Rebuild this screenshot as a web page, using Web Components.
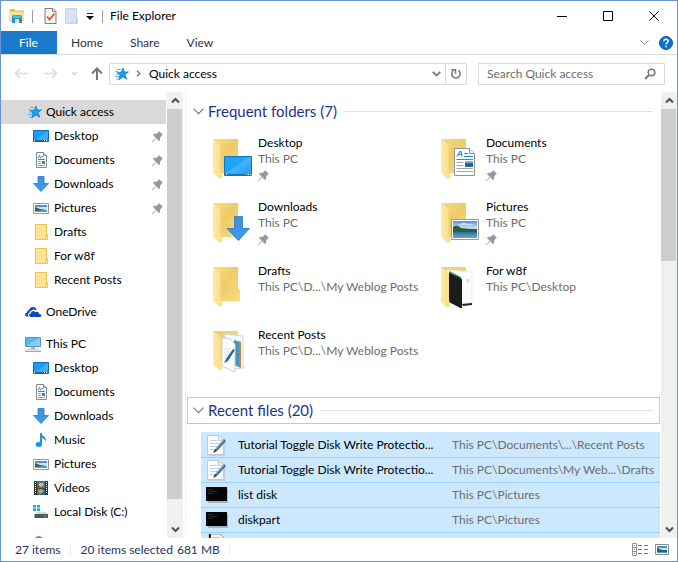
<!DOCTYPE html>
<html lang="en">
<head>
<meta charset="utf-8">
<title>File Explorer</title>
<style>
  html, body { height: 100%; margin: 0; }
  body { font: 12px/16px Lato, "Open Sans", sans-serif; color: #000; background: #fff; }
</style>
</head>
<body>
<explorer-window></explorer-window>

<script>
/* ---------- icons ---------- */
const docLines = '<path d="M1.500.5h7l3 3v12h-10z" fill="#fff" stroke="#8b8b8b"/><path d="M8.500.5v3h3" fill="#e8e8e8" stroke="#8b8b8b"/>';
const folderDefs = `<defs>
  <linearGradient id="fb" x1="0" x2="1" y2="1" y1="0"><stop offset="0" stop-color="#f7dd8c"/><stop offset=".45" stop-color="#eecb66"/><stop offset="1" stop-color="#f9dd80"/></linearGradient>
  <linearGradient id="ff" x2="1" y2="0"><stop offset="0" stop-color="#ffe9a6"/><stop offset="1" stop-color="#fddd86"/></linearGradient>
  <linearGradient id="sky" x2="0" y2="1"><stop offset="0" stop-color="#4c8fe0"/><stop offset=".45" stop-color="#d5e9f9"/><stop offset=".5" stop-color="#356b55"/><stop offset=".65" stop-color="#33708f"/><stop offset="1" stop-color="#6aa5d6"/></linearGradient>
  <linearGradient id="scr" x2="1" y2="1"><stop offset="0" stop-color="#1aa0f8"/><stop offset=".45" stop-color="#27a4fb"/><stop offset=".5" stop-color="#43b2ff"/><stop offset="1" stop-color="#1b9bf5"/></linearGradient>
  <linearGradient id="dn" x2="0" y2="1"><stop offset="0" stop-color="#3f8fe0"/><stop offset="1" stop-color="#3b9bea"/></linearGradient></defs>`;
const folderFront = '<path d="M1 1l8 6v27l1 1v4l-2 2-7-6z" fill="url(#ff)"/><path d="M9 7v24" stroke="#f3cf72" fill="none"/>';
const folderBody = '<path d="M10 36l20-1-2-1z" fill="#e9e9e9"/><path d="M1 1h25v21l2 2v11H1z" fill="url(#fb)"/>';
const smallPicture = '<path d="M.5 2.500h15v10H.5z" fill="#fff" stroke="#9a9a9a"/><path d="M2 4h12v3H2z" fill="#4b93dc"/><path d="M2 6h12v2H2z" fill="#cbe3f4"/><path d="M2 6l5 2 7 1v2H2z" fill="#2f6659"/><path d="M2 10l12-1v2H2z" fill="#5d9dc6"/>';
const pad = '<path d="M2 2h12l5 4v16H2z" fill="#c3cdd5"/><path d="M1.500 1.500h11l5 5v14h-16z" fill="#fbfcfd" stroke="#c4cbd0"/><path d="M12.500 1.500v5h5" fill="#eceff1" stroke="#c4cbd0"/><path d="M4 6.500h7M4 9.500h10M4 12.500h8M4 15.500h5" stroke="#bcd3e4"/><path d="M8 18l2-4 8-9 2 2-8 9z" fill="#3d6f9c"/><path d="M10 15l8-9" stroke="#8ab3d2"/><path d="M7 19l2-4 2 2z" fill="#333"/>';

const ICONS = {
  app: [16, 16, '<path d="M.5 1h5l1 1.500H15v11H.5z" fill="#f3c950"/><path d="M1 4h14v8.500H1z" fill="#fde38f"/><path d="M2 1.800h3v1H2z" fill="#7cc66b"/><path d="M3 15V9q0-2 2-2h6q2 0 2 2v6h-3v-3q0-1-1-1H7q-1 0-1 1v3z" fill="#1c93dc"/><path d="M4 8.500q0-1 1-1h6q1 0 1 1L11 10H5z" fill="#56bdf2"/>'],
  check: [13, 16, '<path d="M1 .5h8l3 3v12H1z" fill="#f6f6f6" stroke="#7d7d7d"/><path d="M8.500.5v3h3" fill="#eee" stroke="#7d7d7d"/><path d="M3 8.500l2.500 3 5-6" fill="none" stroke="#e8501f" stroke-width="1.800"/>'],
  ghost: [13, 16, '<path d="M.5.5h11v9l1 1v5H.5z" fill="#d5e1f4" stroke="#c6d3e8"/><path d="M10.500 15v-5l2 .5v5z" fill="#c9d7ed"/>'],
  more: [8, 8, '<path d="M1 1.500h6" stroke="#222"/><path d="M0 4h8L4 8z" fill="#111"/>'],
  min: [10, 10, '<path d="M0 5.500h10" stroke="#000"/>'],
  max: [10, 10, '<path d="M.5.5h9v9h-9z" fill="none" stroke="#000"/>'],
  close: [10, 10, '<path d="M.5.5l9 9m0-9l-9 9" stroke="#000"/>'],
  expand: [9, 6, '<path d="M.5.5l4 4 4-4" fill="none" stroke="#8d8d8d"/>'],
  help: [14, 14, '<circle cx="7" cy="7" r="6.500" fill="#0f6fd0" stroke="#0a5bb5"/><path d="M4.900 5.200q.2-2 2.200-2t2.100 1.800q0 1-1.100 1.700-1 .6-1 1.500v.4M7.100 9.800v1.500" fill="none" stroke="#fff" stroke-width="1.500"/>'],
  back: [14, 11, '<path d="M13 5.500H1.500M6 1L1.500 5.500 6 10" fill="none" stroke="#d9d9d9" stroke-width="1.600"/>'],
  forward: [14, 11, '<path d="M1 5.500h11.500M8 1l4.500 4.500L8 10" fill="none" stroke="#d9d9d9" stroke-width="1.600"/>'],
  tiny: [7, 5, '<path d="M1 1l2.500 2.500L6 1" fill="none" stroke="#d0d0d0" stroke-width="1.300"/>'],
  up: [12, 13, '<path d="M6 13V1.500M1 6.500l5-5 5 5" fill="none" stroke="#777" stroke-width="2"/>'],
  crumb: [5, 7, '<path d="M1 .8l2.700 2.700L1 6.200" fill="none" stroke="#777" stroke-width="1.400"/>'],
  drop: [9, 6, '<path d="M.7.8l3.800 3.800L8.300.8" fill="none" stroke="#777" stroke-width="1.800"/>'],
  reload: [12, 12, '<path d="M8.300 2.300A4.200 4.200 0 1 1 3.300 2.500" fill="none" stroke="#777" stroke-width="1.500"/><path d="M1.500 1.800h4v4" fill="none" stroke="#777" stroke-width="1.500"/>'],
  search: [12, 12, '<circle cx="7.500" cy="4.500" r="3.300" fill="none" stroke="#777" stroke-width="1.600"/><path d="M5 7l-4 4" stroke="#777" stroke-width="2"/>'],
  star: [15, 14, '<path d="M9 1l1.300 4 4.200-.1-3.500 2.700 1.800 4.600-3.800-2.300-4.200 3 1.200-5-3-2.400 4.300-.3z" fill="#1d9cec" stroke="#1281ce" stroke-width=".8"/><path d="M3 2.500h4M1.500 4.500H4M2 7h3M1 9.500h4M2 12h2" stroke="#5bb5ee"/>'],
  desktop: [16, 12, '<defs><linearGradient id="d" x2="1" y2="1"><stop offset="0" stop-color="#149af5"/><stop offset=".5" stop-color="#1a9ff8"/><stop offset=".55" stop-color="#46b4ff"/><stop offset="1" stop-color="#27a3fb"/></linearGradient></defs><path d="M.5.5h15v11H.5z" fill="url(#d)" stroke="#0b6eb5"/><path d="M1 10.500h14" stroke="#0b68a8"/><path d="M1 10.500h1m9 0h1m1 0h1" stroke="#fff"/>'],
  document: [13, 16, docLines + '<path d="M3 6.500l1.500-3L6 6.500M6.500 4.500h2" fill="none" stroke="#2295dd"/><path d="M3 7.500h7" stroke="#2295dd"/><path d="M3 9.500h3M3 11.500h3M3 13.500h7" stroke="#999"/><path d="M7 9h3v3H7z" fill="#3c83b5"/>'],
  download: [16, 16, '<path d="M5 .5h6v7h4.500L8 15.500.5 7.500H5z" fill="#3d97e4" stroke="#2678c3" stroke-width=".8"/>'],
  picture: [16, 14, smallPicture],
  folder: [13, 16, '<path d="M.5.5h11v10l1 .5v4.500H.5z" fill="#ffe395" stroke="#e9c353"/><path d="M10.500 15v-4l2-.5v5z" fill="#fbe9b0" stroke="#e9c353"/>'],
  onedrive: [17, 10, '<path d="M1.500 9.500Q0 9 0 7.500 0 5.600 2 5.400 2 3.500 4 3q1-3 4-3 3 0 4 2.500l-2 .6Q8.500 1.800 6.800 3.500 4.500 3.800 4.400 6 3 6.200 3 8q0 1 .8 1.500z" fill="#0f4db0"/><path d="M6 10Q4 10 4 8.200 4 6.600 5.800 6.500 5.800 4 8.200 4q1.300 0 2 1 3.600-.9 4 2 2.300 0 2.300 1.600Q16.500 10 15 10z" fill="#0f4db0"/>'],
  pc: [16, 15, '<path d="M.5.5h15v9H.5z" fill="#51b5f2" stroke="#5d93b5"/><path d="M1 9l13-8h1v8z" fill="#86cdf8"/><path d="M6 10h4v2H6z" fill="#a9b8c2"/><path d="M2 12.500h12" stroke="#c5ced4"/><path d="M0 14.300h16" stroke="#7f97a8"/>'],
  music: [16, 16, '<path d="M8 1v11" stroke="#1c96ea" stroke-width="2"/><path d="M8 0q.5 3 3 4.500 2.500 1.500 1.500 5.500Q12 6.500 8 5.500z" fill="#1c96ea"/><ellipse cx="5.800" cy="12.500" rx="3.200" ry="2.500" fill="#1c96ea"/>'],
  video: [16, 16, '<path d="M1 1h14v14H1z" fill="#333"/><path d="M2.500 2v12M13.500 2v12" stroke="#fff" stroke-dasharray="1 1"/><path d="M4 1h8v7H4z" fill="#46769f"/><path d="M4 8.500h8V15H4z" fill="#2566b3"/><path d="M6 3h4l1 2-3 2-2-1z" fill="#e8bd35"/><path d="M5 10l3-1 3 2-2 2-3 1z" fill="#d4a52c"/><path d="M4 6h3v1H4zM9 13h3v1H9z" fill="#a34039"/>'],
  disk: [16, 14, '<path d="M0 0h3v2.500H0zM4 0h3v2.500H4zM0 3.300h3V6H0zM4 3.300h3V6H4z" fill="#13b3e8"/><path d="M4 7h9l2 2.500H1.500z" fill="#d9dbdd"/><path d="M1.500 9h13.500v4H1.500z" fill="#55585b"/><path d="M11 11h2" stroke="#4ee04a"/>'],
  network: [16, 16, '<circle cx="6" cy="5" r="5" fill="#a9cfe2"/><path d="M2 1.500L6 0l3 1.500-2 1H3z" fill="#5a9ab8"/>'],
  pin: [11, 11, '<path d="M7 0l4 4-1.300.5L8 7l.3 2L7 10 4.200 7.200.6 11 0 10.400 3.800 6.800 1 4l1-1.300L4 3l2.500-1.700z" fill="#8e9aa4"/>'],
  group: [11, 7, '<path d="M.5.7l5 5 5-5" fill="none" stroke="#777" stroke-width="1.200"/>'],
  arrowup: [9, 7, '<path d="M1 5.500L4.500 2 8 5.500" fill="none" stroke="#505050" stroke-width="2"/>'],
  arrowdown: [9, 7, '<path d="M1 1.500L4.500 5 8 1.500" fill="none" stroke="#505050" stroke-width="2"/>'],
  'f-plain': [40, 42, folderDefs + folderBody + folderFront],
  'f-desktop': [40, 42, folderDefs + folderBody + folderFront + '<path d="M12.500 18.500h27v19h-27z" fill="url(#scr)" stroke="#0f75bd"/><path d="M13 36.500h26" stroke="#0f75bd"/><path d="M14 36.500h1m19 0h1m1 0h1m1 0h1" stroke="#fff"/>'],
  'f-document': [40, 42, folderDefs + folderBody + folderFront + '<path d="M14.500 10.500h15l5 5v22h-20z" fill="#fff" stroke="#8f9498"/><path d="M29.500 10.500v5h5" fill="#ececec" stroke="#8f9498"/><path d="M17 18.500l3-5h1l1 5M18 16.500h4M24 15.500h4M24 18.500h9M16.500 21.500h16.500" fill="none" stroke="#1f90da" stroke-width="1.200"/><path d="M16.500 24.500h7M16.500 27.500h7M16.500 30.500h16.500M16.500 33.500h16.500" stroke="#a5a5a5"/><path d="M25 23h8v6h-8z" fill="#2d648f"/><path d="M25 23h8v2h-8z" fill="#6db0e8"/>'],
  'f-download': [40, 42, folderDefs + folderBody + folderFront + '<path d="M22.500 14.500h8v12h7L26.500 38.500l-11.500-12h7.500z" fill="url(#dn)" stroke="#2677c4" stroke-width=".8"/>'],
  'f-picture': [40, 42, folderDefs + folderBody + folderFront + '<path d="M11.500 17.500h27v20h-27z" fill="#fff" stroke="#9a9a9a"/><path d="M13 19h24v17H13z" fill="url(#sky)"/><path d="M13 25q4-3 8 1 7 1 16 1v3H13z" fill="#2c5d4b"/><path d="M20 22q4-2 8 0 4-1 6 1H18z" fill="#fff" opacity=".6"/>'],
  'f-dark': [40, 42, folderDefs + '<path d="M1 1h25v30H1z" fill="#f1d175"/><path d="M7 4l25 2v31l-22 1z" fill="#fcfcfc" stroke="#ececec"/><path d="M26 14h4m-4 2h3" stroke="#ccc"/><path d="M9 5l12 6v2l-12-5z" fill="#3d8a3a"/><path d="M9 7l13 6v30l-13-7z" fill="#1b1c1c"/><path d="M22 38l10-1v2l-9 1z" fill="#1c2733"/><path d="M1 1l8 6v26l1 7-2 2-7-6z" fill="url(#ff)"/>'],
  'f-posts': [40, 42, folderDefs + '<path d="M1 1h25v30H1z" fill="#f1d175"/><path d="M22 40l13-2-4-2z" fill="#e9e9e9"/><path d="M12 4l19 2v32l-9 1z" fill="#f9f9f9" stroke="#d5d5d5"/><path d="M22 10l7 2v26l-7-3z" fill="#4d95ae"/><path d="M27 12l2 1v24l-2-1z" fill="#b6894a"/><path d="M10 8l8 1 5 5v28l-13-6z" fill="#fff" stroke="#d0d0d0"/><path d="M12 19h7m-7 3h8m-8 3h6m-6 3h5" stroke="#d2dbe2"/><path d="M12 33l2-4 7-10 2 1-7 11z" fill="#28679a"/><path d="M1 1l8 6v26l1 5-1 3-8-6z" fill="url(#ff)"/>'],
  note: [22, 22, pad],
  console: [22, 16, '<path d="M2 2h20v14H2z" fill="#9fb3c5"/><path d="M0 0h21v14H0z" fill="#050505"/><path d="M1 2.500h7M2 4.500h9M2 6.500h6" stroke="#2a2a2a"/>'],
  sheet: [22, 22, '<path d="M3 0h11l4 4v18H3z" fill="#f3f5f6" stroke="#8e969c"/><path d="M4 0v21" stroke="#1b2c3a" stroke-width="2"/><path d="M7 4h7" stroke="#999"/>'],
  details: [16, 13, '<path d="M.5.5h4v12h-4zM.5 4.500h4M.5 8.500h4" fill="none" stroke="#909090"/><path d="M2 2.500h1" stroke="#3b9a4a"/><path d="M2 6.500h1" stroke="#2782d6"/><path d="M2 10.500h1" stroke="#e23b2c"/><path d="M6 2.500h4m2 0h4M6 6.500h4m2 0h4M6 10.500h4m2 0h4" stroke="#777"/>'],
  thumbs: [14, 11, '<path d="M.5.5h13v10H.5z" fill="#fff" stroke="#8a8a8a"/><path d="M2 2h10v7H2z" fill="#4d91d5"/><path d="M2 4h10v2H2z" fill="#c4def2"/><path d="M2 4l5 2h5v2H2z" fill="#2d6558"/>']
};

const BASE = `<style>
  :host { box-sizing: border-box; }
  *, *::before, *::after { box-sizing: border-box; }
  button { font: inherit; color: inherit; background: none; border: 0; padding: 0; margin: 0; display: flex; align-items: center; justify-content: center; }
  a { color: inherit; text-decoration: none; }
  input { font: inherit; }
</style>`;

function define(name, render) {
  customElements.define(name, class extends HTMLElement {
    connectedCallback() {
      if (this.shadowRoot) return;
      this.attachShadow({ mode: 'open' }).innerHTML = BASE + render(this);
    }
  });
}
const attr = (el, n, d = '') => el.getAttribute(n) ?? d;
const icon = n => `<ui-icon name="${n}"></ui-icon>`;

define('ui-icon', el => {
  const [w, h, body] = ICONS[attr(el, 'name')];
  return `<style>:host { display: inline-flex; flex: none; } svg { display: block; }</style>
  <svg width="${w}" height="${h}" viewBox="0 0 ${w} ${h}" aria-hidden="true">${body}</svg>`;
});

/* ---------- window chrome ---------- */
define('title-bar', () => `<style>
  :host { display: flex; align-items: center; height: 30px; padding-left: 8px; }
  .quick { display: flex; align-items: center; }
  .rule { width: 1px; height: 13px; background: #9b9b9b; margin: 0 11px 0 7px; }
  .tools { display: flex; align-items: center; gap: 8px; }
  .rule.end { margin: 0 7px 0 8px; }
  h1 { font: inherit; margin: 0; flex: 1; }
  .caption { display: flex; }
  .caption button { width: 46px; height: 30px; }
  </style>
  <div class="quick">${icon('app')}<span class="rule"></span>
    <div class="tools">
      <button aria-label="Properties">${icon('check')}</button>
      <button aria-label="New folder">${icon('ghost')}</button>
      <button aria-label="Customize toolbar">${icon('more')}</button>
    </div><span class="rule end"></span></div>
  <h1>File Explorer</h1>
  <div class="caption">
    <button aria-label="Minimize">${icon('min')}</button>
    <button aria-label="Maximize">${icon('max')}</button>
    <button aria-label="Close">${icon('close')}</button>
  </div>`);

define('ribbon-tabs', () => `<style>
  :host { display: flex; align-items: stretch; height: 24px; border-bottom: 1px solid #dadbdc; color: #333; }
  nav { display: flex; flex: 1; }
  nav button { padding: 0 14px 0 13px; }
  nav .file { width: 56px; background: #1979ca; color: #fff; margin-right: 1px; }
  .side { display: flex; gap: 10px; align-items: center; padding-right: 4px; }
  </style>
  <nav><button class="file">File</button><button>Home</button><button>Share</button><button>View</button></nav>
  <div class="side"><button aria-label="Expand ribbon">${icon('expand')}</button><button aria-label="Help">${icon('help')}</button></div>`);

define('address-bar', () => `<style>
  :host { display: flex; align-items: center; height: 37px; padding: 0 12px 0 13px; }
  .moves { display: flex; align-items: center; gap: 13px; }
  .moves .pair { display: flex; gap: 16px; }
  .box { display: flex; align-items: stretch; height: 22px; border: 1px solid #d9d9d9; min-width: 0; }
  .path { flex: 1; margin: 0 11px 0 6px; }
  .crumbs { display: flex; align-items: center; flex: 1; padding-left: 4px; }
  .crumbs ui-icon:nth-of-type(2) { margin: 0 8px 0 7px; }
  .drop { width: 18px; }
  .reload { width: 21px; border-left: 1px solid #d9d9d9; }
  .find { width: 187px; align-items: center; padding: 0 8px; }
  input { flex: 1; min-width: 0; border: 0; padding: 0; background: none; outline: 0; color: #6d6d6d; }
  input::placeholder { color: #6d6d6d; opacity: 1; }
  </style>
  <div class="moves">
    <div class="pair"><button aria-label="Back" disabled>${icon('back')}</button>
    <button aria-label="Forward" disabled>${icon('forward')}</button></div>
    <button aria-label="Recent locations" disabled>${icon('tiny')}</button>
    <button aria-label="Up">${icon('up')}</button>
  </div>
  <div class="box path">
    <div class="crumbs">${icon('star')}${icon('crumb')}<button>Quick access</button></div>
    <button class="drop" aria-label="Previous locations">${icon('drop')}</button>
    <button class="reload" aria-label="Refresh">${icon('reload')}</button>
  </div>
  <div class="box find"><input type="search" aria-label="Search Quick access" placeholder="Search Quick access">
    <button aria-label="Search">${icon('search')}</button></div>`);

define('scroll-track', el => `<style>
  :host { display: flex; flex-direction: column; width: 16px; background: #f0f0f0; }
  button { height: 17px; flex: none; }
  .thumb { flex: ${attr(el, 'thumb')} 1 0; background: #cdcdcd; margin-right: 1px; }
  .rest { flex: ${attr(el, 'rest')} 1 0; }
  </style>
  <button aria-label="Scroll up">${icon('arrowup')}</button>
  <div class="thumb"></div><div class="rest"></div>
  <button aria-label="Scroll down">${icon('arrowdown')}</button>`);

/* ---------- navigation pane ---------- */
define('nav-item', el => `<style>
  :host { display: block; }
  a { display: flex; align-items: center; height: 24px; padding-left: 32px; padding-right: 4px; }
  .glyph { width: 16px; display: flex; justify-content: center; margin-right: 5px; }
  .text { flex: 1; white-space: nowrap; }
  :host([root]) a { padding-left: 24px; }
  :host([gap]) { padding-top: 8px; }
  :host([selected]) a { background: #d9d9d9; margin-right: 1px; }
  :host([selected]) .glyph { padding-left: 3px; }
  </style>
  <a href="#"><span class="glyph">${icon(attr(el, 'icon'))}</span><span class="text"><slot></slot></span>${el.hasAttribute('pinned') ? icon('pin') : ''}</a>`);

define('nav-pane', () => `<style>
  :host { display: flex; width: 185px; flex: none; min-height: 0; }
  nav { flex: 1; padding-top: 8px; overflow: hidden; }
  .edge { width: 3px; border-right: 1px solid #f0f0f0; }
  </style>
  <nav aria-label="Folders">
    <nav-item root selected icon="star">Quick access</nav-item>
    <nav-item icon="desktop" pinned>Desktop</nav-item>
    <nav-item icon="document" pinned>Documents</nav-item>
    <nav-item icon="download" pinned>Downloads</nav-item>
    <nav-item icon="picture" pinned>Pictures</nav-item>
    <nav-item icon="folder">Drafts</nav-item>
    <nav-item icon="folder">For w8f</nav-item>
    <nav-item icon="folder">Recent Posts</nav-item>
    <nav-item root gap icon="onedrive">OneDrive</nav-item>
    <nav-item root gap icon="pc">This PC</nav-item>
    <nav-item icon="desktop">Desktop</nav-item>
    <nav-item icon="document">Documents</nav-item>
    <nav-item icon="download">Downloads</nav-item>
    <nav-item icon="music">Music</nav-item>
    <nav-item icon="picture">Pictures</nav-item>
    <nav-item icon="video">Videos</nav-item>
    <nav-item icon="disk">Local Disk (C:)</nav-item>
    <nav-item gap icon="network"></nav-item>
  </nav>
  <scroll-track thumb="390" rest="22"></scroll-track><span class="edge"></span>`);

/* ---------- content pane ---------- */
define('group-header', el => `<style>
  :host { display: flex; align-items: center; height: 27px; margin: 0 1px; padding: 0 6px 0 5px; border: 1px solid transparent; color: #1e3287; }
  :host([focused]) { border-color: #99d1ff; }
  h2 { font-size: 15px; line-height: 18px; font-weight: 400; margin: 0 8px 0 4px; padding-bottom: 2px; white-space: nowrap; }
  .line { flex: 1; height: 1px; background: #e2e2e2; }
  </style>
  <button aria-label="Collapse group">${icon('group')}</button><h2><slot></slot></h2><span class="line"></span>`);

define('folder-tile', el => `<style>
  :host { display: block; height: 64px; min-width: 0; }
  a { display: flex; gap: 6px; }
  ui-icon { flex: none; }
  .art { padding-top: 3px; }
  .text { display: flex; flex-direction: column; min-width: 0; white-space: nowrap; }
  .where { color: #6d6d6d; }
  .pin { padding-top: 2px; }
  </style>
  <a href="#"><span class="art">${icon(attr(el, 'icon'))}</span>
  <span class="text"><span><slot></slot></span><span class="where">${attr(el, 'where')}</span>
  ${el.hasAttribute('pinned') ? `<span class="pin">${icon('pin')}</span>` : ''}</span></a>`);

define('recent-files', () => {
  const rows = [
    ['note', 'Tutorial Toggle Disk Write Protectio...', 'This PC\\Documents\\...\\Recent Posts'],
    ['note', 'Tutorial Toggle Disk Write Protectio...', 'This PC\\Documents\\My Web...\\Drafts'],
    ['console', 'list disk', 'This PC\\Pictures'],
    ['console', 'diskpart', 'This PC\\Pictures'],
    ['sheet', '', '']
  ];
  return `<style>
  :host { display: block; margin: 8px 1px 0 15px; }
  table { width: 100%; border-collapse: separate; border-spacing: 0; table-layout: fixed; background: #cce8ff; border-top: 1px solid #cce8ff; }
  td { height: 25px; padding: 0; border-bottom: 1px solid #99d1ff; white-space: nowrap; overflow: hidden; }
  td:first-child { width: 37px; }
  td:last-child { width: 208px; color: #6d6d6d; }
  td ui-icon { display: flex; justify-content: center; padding-right: 5px; }
  </style>
  <table aria-label="Recent files"><tbody>${rows.map(r => `<tr><td>${icon(r[0])}</td><td>${r[1]}</td><td>${r[2]}</td></tr>`).join('')}</tbody></table>`;
});

define('content-pane', () => `<style>
  :host { display: flex; flex: 1; min-width: 0; min-height: 0; }
  main { flex: 1; min-width: 0; padding-top: 6px; overflow: hidden; }
  .tiles { display: grid; grid-template-columns: 228px 1fr; padding: 10px 0 6px 26px; }
  </style>
  <main>
    <group-header>Frequent folders (7)</group-header>
    <div class="tiles">
      <folder-tile icon="f-desktop" where="This PC" pinned>Desktop</folder-tile>
      <folder-tile icon="f-document" where="This PC" pinned>Documents</folder-tile>
      <folder-tile icon="f-download" where="This PC" pinned>Downloads</folder-tile>
      <folder-tile icon="f-picture" where="This PC" pinned>Pictures</folder-tile>
      <folder-tile icon="f-plain" where="This PC\\D...\\My Weblog Posts">Drafts</folder-tile>
      <folder-tile icon="f-dark" where="This PC\\Desktop">For w8f</folder-tile>
      <folder-tile icon="f-posts" where="This PC\\D...\\My Weblog Posts">Recent Posts</folder-tile>
    </div>
    <group-header focused>Recent files (20)</group-header>
    <recent-files></recent-files>
  </main>
  <scroll-track thumb="152" rest="260"></scroll-track>`);

define('status-bar', () => `<style>
  :host { display: flex; align-items: center; height: 23px; padding: 0 8px 0 14px; color: #1e3560; }
  span { white-space: nowrap; }
  .sep { width: 1px; height: 13px; background: #ececec; margin: 0 10px 0 9px; }
  .size { margin-left: 4px; }
  .views { margin-left: auto; display: flex; gap: 7px; }
  </style>
  <span>27 items</span><i class="sep"></i><span>20 items selected</span><span class="size">681 MB</span><i class="sep"></i>
  <div class="views"><button aria-label="Details view">${icon('details')}</button><button aria-label="Large icons view">${icon('thumbs')}</button></div>`);

define('explorer-window', () => `<style>
  :host { display: flex; flex-direction: column; height: 100vh; border: 1px solid #6a93cf; background: #fff; overflow: hidden; }
  .body { display: flex; flex: 1; min-height: 0; }
  title-bar, ribbon-tabs, address-bar, status-bar { flex: none; }
  </style>
  <title-bar></title-bar><ribbon-tabs></ribbon-tabs><address-bar></address-bar>
  <div class="body"><nav-pane></nav-pane><content-pane></content-pane></div>
  <status-bar></status-bar>`);
</script>
</body>
</html>
